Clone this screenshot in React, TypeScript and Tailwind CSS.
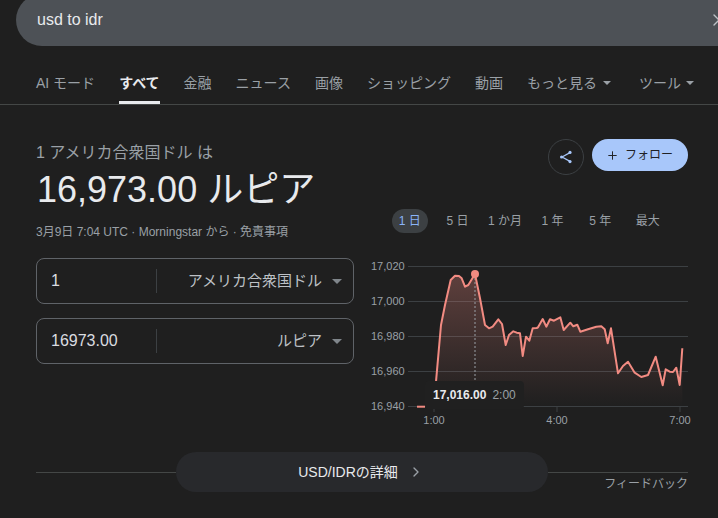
import { Plus, X, ChevronRight } from "lucide-react";

const navItems = ["AI モード", "すべて", "金融", "ニュース", "画像", "ショッピング", "動画"];
const ranges = ["1 日", "5 日", "1 か月", "1 年", "5 年", "最大"];
const yLabels = [
  { y: 266.5, text: "17,020" },
  { y: 301.5, text: "17,000" },
  { y: 336.5, text: "16,980" },
  { y: 371.5, text: "16,960" },
  { y: 406.5, text: "16,940" },
];
const xLabels = [
  { x: 434, text: "1:00" },
  { x: 557, text: "4:00" },
  { x: 680, text: "7:00" },
];

const line =
  "436,381.7 441,325 445,305 450.7,280 455,275.7 459,276 461.7,278.3 465,286.7 468.3,285 475,274 480,298.3 485,325 489,328.3 492.7,326.7 498.3,319.3 502,324 505.7,345 509,335 513.3,331.3 516.7,332.7 520,333.3 522.7,356 526,336.7 529.3,340.7 532.7,328.3 536.7,328 538,327.3 542.7,319 546.3,326.7 550,319.3 554,320.7 560.3,317.3 563.7,330 570.3,322.7 573.3,326.3 577.3,324.7 580.3,331.7 588,329.3 596.3,326.7 601.3,326.3 604.7,329.3 607.7,343.3 611,328.3 618,373.3 623,366 628,361.7 634.7,372.7 641.3,377 648,375 655.7,356.7 662.7,385.3 665.7,369.3 669.7,371.7 673,372 676.3,367.7 679.7,385 682.3,348.3";

function Caret({ className }: { className: string }) {
  return <span className={`inline-block h-0 w-0 border-x-transparent border-t-current ${className}`} />;
}

function Converter({ value, unit }: { value: string; unit: string }) {
  return (
    <div className="flex h-[46px] items-center rounded-lg border border-[#5f6368] pl-[14px] pr-[11px]">
      <div className="w-[105px] text-base text-[#dadce0]">{value}</div>
      <div className="h-6 w-px bg-[#3c4043]" />
      <div className="flex-1 text-right text-[15px] text-[#bdc1c6]">{unit}</div>
      <Caret className="ml-[10px] border-x-[5px] border-t-[5px] text-[#80868b]" />
    </div>
  );
}

function Chart() {
  return (
    <div className="relative h-[172px] w-[317px]">
      <svg width="317" height="172" viewBox="371 258 317 172" className="block overflow-visible">
        <defs>
          <linearGradient id="area" x1="0" y1="0" x2="0" y2="1">
            <stop offset="0%" stopColor="#f28b82" stopOpacity="0.3" />
            <stop offset="100%" stopColor="#f28b82" stopOpacity="0" />
          </linearGradient>
        </defs>
        {yLabels.map((l) => (
          <g key={l.text}>
            <line x1="408" x2="688" y1={l.y} y2={l.y} stroke="#3c4043" strokeWidth="1.2" />
            <text x="371" y={l.y + 3} fontSize="11" fill="#9aa0a6">
              {l.text}
            </text>
          </g>
        ))}
        {xLabels.map((l) => (
          <g key={l.text}>
            <line x1={l.x} x2={l.x} y1="407" y2="412" stroke="#3c4043" />
            <text x={l.x} y="424" fontSize="11" fontWeight="500" textAnchor="middle" fill="#9aa0a6">
              {l.text}
            </text>
          </g>
        ))}
        <polygon points={`436,406.5 ${line} 682.3,406.5`} fill="url(#area)" />
        <line x1="417" x2="425" y1="406.7" y2="406.7" stroke="#f28b82" strokeWidth="2" />
        <line x1="475" x2="475" y1="274" y2="382" stroke="#9aa0a6" strokeDasharray="2 2" />
        <polyline points={line} fill="none" stroke="#f28b82" strokeWidth="2" strokeLinejoin="round" />
        <circle cx="475" cy="274" r="4" fill="#f28b82" />
      </svg>
      <div className="absolute left-[54px] top-[123px] flex h-[28px] w-[99px] items-center rounded bg-[#202020] pl-2 text-xs">
        <span className="font-bold text-[#e8eaed]">17,016.00</span>
        <span className="ml-[6px] text-[#9aa0a6]">2:00</span>
      </div>
    </div>
  );
}

export default function App() {
  return (
    <div className="h-[518px] w-[718px] overflow-hidden bg-[#1f1f1f] font-['Liberation_Sans','Noto_Sans_CJK_JP',sans-serif]">
      {/* search box, top is cut off by the window */}
      <div className="ml-4 -mt-[6px] flex h-[52px] w-[760px] items-center rounded-[26px] bg-[#4d5156] pl-[21px] text-base text-[#e8eaed]">
        <span className="w-[672px]">usd to idr</span>
        <X size={20} strokeWidth={1.6} className="text-[#bdc1c6]" />
      </div>

      <nav className="mt-4 flex h-[43px] gap-6 border-b border-[#444746] pl-9 text-sm text-[#9aa0a6]">
        {navItems.map((item) =>
          item === "すべて" ? (
            <div key={item} className="flex items-center border-b-[3px] border-[#e8eaed] pt-[3px] font-bold text-[#e8eaed]">
              {item}
            </div>
          ) : (
            <div key={item} className="flex items-center whitespace-nowrap">
              {item}
            </div>
          ),
        )}
        <div className="flex items-center whitespace-nowrap">
          もっと見る
          <Caret className="ml-[6px] border-x-[4px] border-t-[4px]" />
        </div>
        <div className="ml-[4px] flex items-center whitespace-nowrap">
          ツール
          <Caret className="ml-[5px] border-x-[4px] border-t-[4px]" />
        </div>
      </nav>

      <div className="flex pl-9 pt-[34px]">
        <div className="w-[318px]">
          <div className="mt-[4px] text-base leading-5 text-[#9aa0a6]">1 アメリカ合衆国ドル は</div>
          <div className="mt-[5px] pl-px text-4xl leading-[44px] text-[#e8eaed]">16,973.00 ルピア</div>
          <div className="mt-[12px] text-xs leading-4 text-[#9aa0a6]">3月9日 7:04 UTC · Morningstar から · 免責事項</div>
          <div className="mt-[18px] flex flex-col gap-[14px]">
            <Converter value="1" unit="アメリカ合衆国ドル" />
            <Converter value="16973.00" unit="ルピア" />
          </div>
        </div>

        <div className="ml-[17px] w-[317px]">
          <div className="flex justify-end gap-2">
            <button className="flex h-9 w-9 items-center justify-center rounded-full border border-[#3c4043]">
              <svg width="14" height="14" viewBox="0 0 14 14" fill="#a8c7fa" stroke="#a8c7fa">
                <line x1="3" y1="7" x2="11" y2="2.6" strokeWidth="1.2" />
                <line x1="3" y1="7" x2="11" y2="11.4" strokeWidth="1.2" />
                <circle cx="2.6" cy="7" r="1.6" stroke="none" />
                <circle cx="11" cy="2.4" r="1.6" stroke="none" />
                <circle cx="11" cy="11.6" r="1.6" stroke="none" />
              </svg>
            </button>
            <button className="flex h-8 w-24 items-center rounded-full bg-[#a8c7fa] pl-[14px] text-xs text-[#202124]">
              <Plus size={13} strokeWidth={1.8} />
              <span className="ml-[6px]">フォロー</span>
            </button>
          </div>

          <div className="ml-[15px] mt-[34px] flex">
            {ranges.map((r, i) => (
              <div key={r} className="flex w-[47.6px] justify-center">
                <span
                  className={
                    i === 0
                      ? "flex h-6 items-center whitespace-nowrap rounded-full bg-[#3c4043] px-[7px] text-xs text-[#8ab4f8]"
                      : "flex h-6 items-center whitespace-nowrap text-xs text-[#9aa0a6]"
                  }
                >
                  {r}
                </span>
              </div>
            ))}
          </div>

          <div className="mt-[25px]">
            <Chart />
          </div>
        </div>
      </div>

      <div className="ml-9 mt-[22px] w-[652px]">
        <div className="flex h-10 items-center">
          <div className="h-px flex-1 bg-[#444746]" />
          <button className="flex h-10 w-[372px] items-center justify-center rounded-full bg-[#28292c] pr-[2px] text-sm text-[#e8eaed]">
            <span>USD/IDRの詳細</span>
            <ChevronRight size={16} className="ml-[10px] text-[#9aa0a6]" />
          </button>
          <div className="h-px flex-1 bg-[#444746]" />
        </div>
        <div className="-mt-[16px] text-right text-xs leading-4 text-[#9aa0a6]">フィードバック</div>
      </div>
    </div>
  );
}
